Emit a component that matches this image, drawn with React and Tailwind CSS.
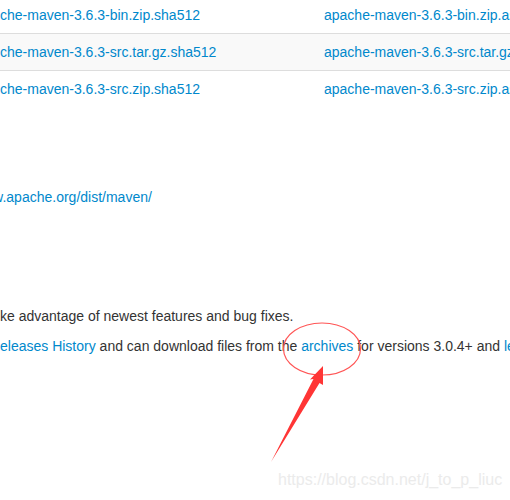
import React from "react";

const rows = [
  { sha: "che-maven-3.6.3-bin.zip.sha512", asc: "apache-maven-3.6.3-bin.zip.asc" },
  { sha: "che-maven-3.6.3-src.tar.gz.sha512", asc: "apache-maven-3.6.3-src.tar.gz.asc" },
  { sha: "che-maven-3.6.3-src.zip.sha512", asc: "apache-maven-3.6.3-src.zip.asc" },
];

function Annotation() {
  return (
    <svg className="absolute left-0 top-0 pointer-events-none" width="510" height="500">
      <ellipse cx="322" cy="349" rx="38.5" ry="26" fill="none" stroke="#ff5555" strokeWidth="1.2" />
      <polygon
        points="323,366 323,385 319.5,383 271,462 313.5,379 310,379.5"
        fill="#ff3535"
      />
    </svg>
  );
}

export default function App() {
  return (
    <div
      className="relative w-[510px] h-[500px] overflow-hidden bg-white text-[14px] leading-[20px] text-[#333333]"
      style={{ fontFamily: '"Liberation Sans", Arial, sans-serif' }}
    >
      {/* download table, cut off on the left */}
      <div className="-mt-[4px]">
        {rows.map((r, i) => (
          <div
            key={i}
            className={
              "grid grid-cols-[324px_1fr] border-t border-[#dddddd] py-2 whitespace-nowrap " +
              (i === 1 ? "bg-[#f9f9f9]" : "")
            }
          >
            <a href="#" className="text-[#0088cc]">{r.sha}</a>
            <a href="#" className="text-[#0088cc]">{r.asc}</a>
          </div>
        ))}
      </div>

      <p className="mt-[80px] whitespace-nowrap">
        <a href="#" className="text-[#0088cc] -ml-[17px]">ww.apache.org/dist/maven/</a>
      </p>

      <p className="mt-[99px] mb-[10px] whitespace-nowrap">
        ke advantage of newest features and bug fixes.
      </p>
      <p className="whitespace-nowrap">
        <a href="#" className="text-[#0088cc]">eleases History</a> and can download files from the{" "}
        <a href="#" className="text-[#0088cc]">archives</a> for versions 3.0.4+ and{" "}
        <a href="#" className="text-[#0088cc]">legacy archives</a> for earlier releases.
      </p>

      <Annotation />

      <div className="absolute left-[278px] top-[470px] text-[16px] leading-[20px] text-[#ebebeb] whitespace-nowrap">
        https://blog.csdn.net/j_to_p_liuc
      </div>
    </div>
  );
}
